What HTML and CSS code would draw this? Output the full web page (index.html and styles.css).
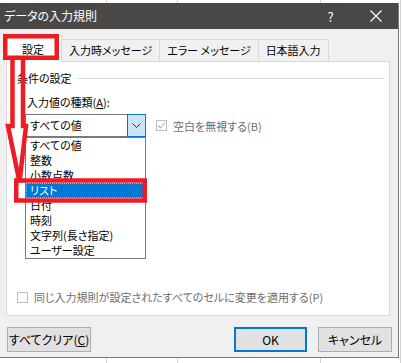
FILE: index.html
```html
<!DOCTYPE html>
<html lang="ja">
<head>
    <meta charset="UTF-8">
    <title>データの入力規則</title>
    <link rel="stylesheet" href="styles.css">
</head>
<body>
    <div class="dialog">
        <div class="titlebar">
            <span class="title">データの入力規則</span>
            <span class="title-btn">?</span>
            <span class="title-btn">
                <svg width="12" height="12" viewBox="0 0 12 12"><path d="M0.5 0.5 L11.5 11.5 M11.5 0.5 L0.5 11.5" stroke="#fff" stroke-width="1.1" fill="none"/></svg>
            </span>
        </div>

        <div class="body">
            <div class="tabs">
                <div class="tab active">設定</div>
                <div class="tab">入力時メッセージ</div>
                <div class="tab">エラー メッセージ</div>
                <div class="tab">日本語入力</div>
            </div>

            <div class="panel">
                <div class="group-title">
                    <span>条件の設定</span>
                    <span class="rule"></span>
                </div>

                <div class="field">
                    <div class="field-label">入力値の種類(<u>A</u>):</div>
                    <div class="field-row">
                        <div class="combo">
                            <div class="combo-value">すべての値</div>
                            <div class="combo-btn">
                                <svg width="9" height="5" viewBox="0 0 9 5"><path d="M0.5 0.5 L4.5 4.5 L8.5 0.5" stroke="#333" stroke-width="1" fill="none"/></svg>
                            </div>
                            <div class="listbox">
                                <div class="list-item">すべての値</div>
                                <div class="list-item">整数</div>
                                <div class="list-item">小数点数</div>
                                <div class="list-item selected">リスト</div>
                                <div class="list-item">日付</div>
                                <div class="list-item">時刻</div>
                                <div class="list-item">文字列(長さ指定)</div>
                                <div class="list-item">ユーザー設定</div>
                            </div>
                        </div>
                        <label class="check disabled">
                            <span class="box">
                                <svg width="9" height="9" viewBox="0 0 9 9"><path d="M1 4.5 L3.5 7 L8 1.5" stroke="#b4b4b4" stroke-width="1.1" fill="none"/></svg>
                            </span>
                            空白を無視する(B)
                        </label>
                    </div>
                </div>

                <label class="check disabled apply">
                    <span class="box"></span>
                    同じ入力規則が設定されたすべてのセルに変更を適用する(P)
                </label>
            </div>

            <div class="buttons">
                <button class="btn btn-clear">すべてクリア(<u>C</u>)</button>
                <span class="spacer"></span>
                <button class="btn btn-default">OK</button>
                <button class="btn">キャンセル</button>
            </div>
        </div>
    </div>

    <!-- red annotation marks drawn over the dialog -->
    <svg class="marks" width="402" height="363" viewBox="0 0 402 363">
        <rect x="5.25" y="36.25" width="51.5" height="21.5" stroke="#ed1c24" stroke-width="4.5" fill="none"/>
        <polyline points="12.5,58 12.5,126 8,126 19.5,182 26,126 23,126 23,58" stroke="#ed1c24" stroke-width="4.5" stroke-linejoin="miter" fill="none"/>
        <rect x="16.25" y="180.5" width="128.5" height="20" stroke="#ed1c24" stroke-width="4.5" fill="none"/>
    </svg>
</body>
</html>
```

FILE: styles.css
```css
* {
    margin: 0;
    padding: 0;
    box-sizing: border-box;
}

body {
    position: relative;
    width: 402px;
    height: 363px;
    overflow: hidden;
    font-family: "Noto Sans CJK JP", "Noto Sans", sans-serif;
    font-size: 11px;
    font-feature-settings: "palt";
    color: #000;
    background:
        linear-gradient(90deg,
            transparent 106px, #d4d4d4 106px 107px,
            transparent 107px 177px, #d4d4d4 177px 178px,
            transparent 178px 320px, #d4d4d4 320px 321px,
            transparent 321px 400px, #d4d4d4 400px 401px,
            transparent 401px),
        #fff;
}

.dialog {
    margin-top: 3px;
    width: 399px;
    border-right: 1px solid #7b7b7b;
    border-bottom: 1px solid #7b7b7b;
}

.titlebar {
    display: flex;
    align-items: center;
    height: 26px;
    padding-left: 4px;
    background: #4a4846;
    color: #fff;
    font-size: 12px;
}

.title {
    flex: 1;
    line-height: 26px;
}

.title-btn {
    width: 45px;
    height: 26px;
    display: flex;
    align-items: center;
    justify-content: center;
    font-size: 13px;
}

.body {
    background: #f0f0f0;
    padding: 6px 7px 5px 6px;
}

.tabs {
    display: flex;
    align-items: flex-end;
    height: 26px;
    margin-left: -2px;
}

.tab {
    height: 22px;
    line-height: 21px;
    padding: 0 7px;
    border: 1px solid #d9d9d9;
    border-bottom: none;
    margin-left: -1px;
    background: #f0f0f0;
    white-space: nowrap;
}

.tab.active {
    position: relative;
    z-index: 1;
    height: 27px;
    margin-left: 0;
    margin-bottom: -1px;
    padding: 0 17px;
    line-height: 27px;
    background: #fff;
}

.panel {
    display: flex;
    flex-direction: column;
    height: 255px;
    margin-right: 1px;
    padding: 9px 5px 11px 10px;
    background: #fff;
    border: 1px solid #d9d9d9;
}

.group-title {
    display: flex;
    align-items: center;
    gap: 5px;
    line-height: 15px;
}

.rule {
    flex: 1;
    height: 1px;
    background: #dcdcdc;
}

.field {
    margin: 9px 0 0 8px;
}

.field-label {
    padding-left: 2px;
    line-height: 15px;
    margin-bottom: 4px;
}

.field-row {
    display: flex;
    align-items: center;
    gap: 10px;
}

.combo {
    position: relative;
    display: flex;
    width: 121px;
    height: 23px;
    border: 1px solid #7a7a7a;
    background: #fff;
}

.combo-value {
    flex: 1;
    padding-left: 4px;
    line-height: 21px;
}

.combo-btn {
    width: 19px;
    margin: -1px -1px -1px 0;
    border: 1px solid #0078d7;
    background: #cce4f7;
    display: flex;
    align-items: center;
    justify-content: center;
}

.listbox {
    position: absolute;
    top: 22px;
    left: -1px;
    width: 121px;
    z-index: 2;
    background: #fff;
    border: 1px solid #7a7a7a;
}

.list-item {
    height: 15px;
    line-height: 15px;
    padding-left: 4px;
    white-space: nowrap;
}

.list-item.selected {
    background: #0078d7;
    color: #fff;
    outline: 1px dotted #f5a55a;
    outline-offset: -1px;
}

.check {
    display: flex;
    align-items: center;
    gap: 6px;
    line-height: 14px;
    white-space: nowrap;
}

.check.disabled {
    color: #6d6d6d;
}

.box {
    width: 11px;
    height: 11px;
    border: 1px solid #bcbcbc;
    background: #fff;
    display: flex;
    align-items: center;
    justify-content: center;
}

.apply {
    margin-top: auto;
}

.buttons {
    display: flex;
    gap: 11px;
    margin: 11px -1px 0 1px;
}

.spacer {
    flex: 1;
}

.btn {
    height: 25px;
    width: 74px;
    font: inherit;
    font-size: 12px;
    font-feature-settings: "palt";
    background: #e1e1e1;
    border: 1px solid #adadad;
    color: #000;
}

.btn-clear {
    width: 84px;
}

.btn-default {
    width: 73px;
    border: 2px solid #0078d7;
}

.marks {
    position: absolute;
    left: 0;
    top: 0;
    z-index: 10;
    pointer-events: none;
}
```
